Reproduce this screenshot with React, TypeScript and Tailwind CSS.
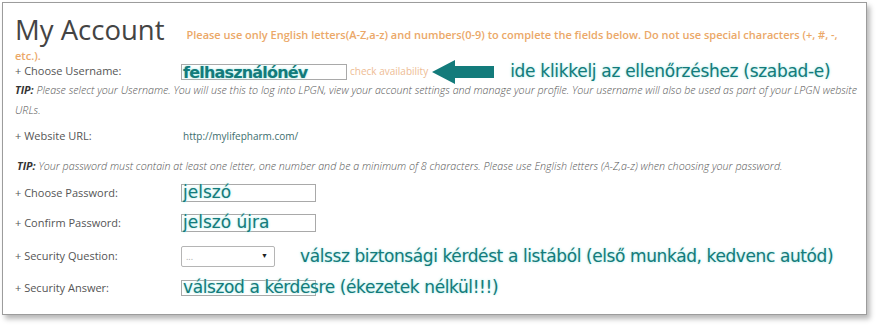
import React from 'react'

const teal = 'text-[#137b7b] [text-shadow:0_0_3px_#a8e8e4,0_0_1px_#cfeeee]'
const note = `font-['DejaVu_Sans',sans-serif] ${teal}`

function Label({ children }: { children: React.ReactNode }) {
  return <div className="w-[166px] shrink-0 text-[11px] text-[#555]">+ {children}</div>
}

function Box({ w, h, children }: { w: string; h: string; children?: React.ReactNode }) {
  return (
    <div className={`${w} ${h} relative border border-[#a9a9a9] bg-white`}>
      <span className="absolute left-[1px] top-1/2 -translate-y-1/2 whitespace-nowrap">{children}</span>
    </div>
  )
}

export default function App() {
  return (
    <div className="w-[880px] h-[332px] bg-white pt-[2px] pl-[2px] font-['Open_Sans',sans-serif]">
      <div className="w-[865px] h-[313px] border border-[#9c9c9c] bg-white shadow-[3px_4px_5px_rgba(0,0,0,0.28)] pl-[12px] pr-[4px]">
        {/* header */}
        <p className="text-[11px] leading-[21px] font-semibold text-[#eba868] pt-[12px] pr-[4px]">
          <span className="text-[27.5px] leading-[30px] font-normal text-[#444] mr-[22px] align-[-1px]">My Account</span>
          Please use only English letters(A-Z,a-z) and numbers(0-9) to complete the fields below. Do not use special characters (+, #, -, etc.).
        </p>

        {/* username */}
        <div className="flex items-center h-[19px] mt-[-4px]">
          <Label>Choose Username:</Label>
          <Box w="w-[166px]" h="h-[16px]">
            <span className={`${note} font-bold text-[16px] tracking-[-0.8px]`}>felhasználónév</span>
          </Box>
          <span className="ml-[3px] text-[10px] text-[#eebc94]">check availability</span>
          <svg width="62" height="24" viewBox="0 0 62 24" className="ml-[4px]">
            <polygon points="0,12 23,0 23,6 62,6 62,18 23,18 23,24" fill="#137b7b" />
          </svg>
          <span className={`${note} text-[17px] ml-[16px] tracking-[-0.3px]`}>ide klikkelj az ellenőrzéshez (szabad-e)</span>
        </div>

        <p className="text-[10.7px] leading-[20px] italic font-light text-[#555] mt-[-1px]">
          <b className="font-bold text-[#333]">TIP:</b> Please select your Username. You will use this to log into LPGN, view your account settings and manage your profile. Your username will also be used as part of your LPGN website URLs.
        </p>

        <div className="flex items-center h-[20px] mt-[6px]">
          <Label>Website URL:</Label>
          <span className="ml-[2px] text-[10px] text-[#3d6e6e]">http://mylifepharm.com/</span>
        </div>

        <p className="text-[10.7px] leading-[20px] italic font-light text-[#555] mt-[10px] pl-[2px]">
          <b className="font-bold text-[#333]">TIP:</b> Your password must contain at least one letter, one number and be a minimum of 8 characters. Please use English letters (A-Z,a-z) when choosing your password.
        </p>

        <div className="flex items-center h-[18px] mt-[8px]">
          <Label>Choose Password:</Label>
          <Box w="w-[135px]" h="h-[18px]">
            <span className={`${note} text-[17px]`}>jelszó</span>
          </Box>
        </div>

        <div className="flex items-center h-[18px] mt-[12px]">
          <Label>Confirm Password:</Label>
          <Box w="w-[135px]" h="h-[18px]">
            <span className={`${note} text-[17px]`}>jelszó újra</span>
          </Box>
        </div>

        <div className="flex items-center h-[21px] mt-[14px]">
          <Label>Security Question:</Label>
          <div className="w-[94px] h-[21px] border border-[#b5b5b5] rounded-[2px] flex items-center justify-between pl-[4px] pr-[6px]">
            <span className="text-[9px] text-[#aaa]">...</span>
            <span className="text-[7px] text-[#222]">▼</span>
          </div>
          <span className={`${note} text-[17px] ml-[25px] tracking-[-0.4px]`}>válssz biztonsági kérdést a listából (első munkád, kedvenc autód)</span>
        </div>

        <div className="flex items-center h-[16px] mt-[13px]">
          <Label>Security Answer:</Label>
          <Box w="w-[135px]" h="h-[16px]">
            <span className={`${note} text-[17px] tracking-[-0.4px]`}>válszod a kérdésre (ékezetek nélkül!!!)</span>
          </Box>
        </div>
      </div>
    </div>
  )
}
